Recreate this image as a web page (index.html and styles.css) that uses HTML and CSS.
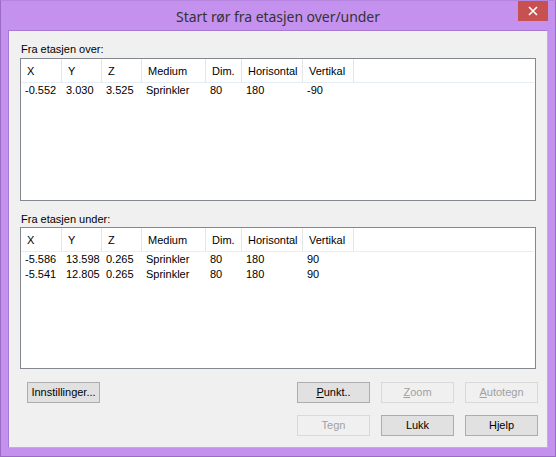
FILE: index.html
```html
<!DOCTYPE html>
<html>
<head>
<meta charset="utf-8">
<link rel="stylesheet" href="styles.css">
</head>
<body>
<div class="window">
  <div class="titlebar">
    <div class="title">Start rør fra etasjen over/under</div>
    <div class="close"><svg width="10" height="10" viewBox="0 0 10 10"><path d="M1 1 L9 9 M9 1 L1 9" stroke="#fff" stroke-width="1.6"/></svg></div>
  </div>
  <div class="client">
    <div class="label">Fra etasjen over:</div>
    <div class="list">
      <div class="row head">
        <div class="c w1">X</div><div class="c w2">Y</div><div class="c w3">Z</div><div class="c w4">Medium</div><div class="c w5">Dim.</div><div class="c w6">Horisontal</div><div class="c w7">Vertikal</div>
      </div>
      <div class="row data">
        <div class="c w1">-0.552</div><div class="c w2">3.030</div><div class="c w3">3.525</div><div class="c w4">Sprinkler</div><div class="c w5">80</div><div class="c w6">180</div><div class="c w7">-90</div>
      </div>
    </div>
    <div class="label second">Fra etasjen under:</div>
    <div class="list">
      <div class="row head">
        <div class="c w1">X</div><div class="c w2">Y</div><div class="c w3">Z</div><div class="c w4">Medium</div><div class="c w5">Dim.</div><div class="c w6">Horisontal</div><div class="c w7">Vertikal</div>
      </div>
      <div class="row data">
        <div class="c w1">-5.586</div><div class="c w2">13.598</div><div class="c w3">0.265</div><div class="c w4">Sprinkler</div><div class="c w5">80</div><div class="c w6">180</div><div class="c w7">90</div>
      </div>
      <div class="row data">
        <div class="c w1">-5.541</div><div class="c w2">12.805</div><div class="c w3">0.265</div><div class="c w4">Sprinkler</div><div class="c w5">80</div><div class="c w6">180</div><div class="c w7">90</div>
      </div>
    </div>
    <div class="buttons">
      <div class="btnrow">
        <div class="btn left">Innstillinger...</div>
        <div class="spacer"></div>
        <div class="btn"><u>P</u>unkt..</div>
        <div class="btn disabled"><u>Z</u>oom</div>
        <div class="btn disabled"><u>A</u>utotegn</div>
      </div>
      <div class="btnrow">
        <div class="spacer"></div>
        <div class="btn disabled">Tegn</div>
        <div class="btn">Lukk</div>
        <div class="btn">Hjelp</div>
      </div>
    </div>
  </div>
</div>
</body>
</html>
```

FILE: styles.css
```css
html, body {
  margin: 0;
  padding: 0;
}
body {
  width: 556px;
  height: 457px;
  overflow: hidden;
}
.window {
  width: 556px;
  height: 457px;
  box-sizing: border-box;
  background: #c591ee;
  border: 1px solid #9a6cc4;
  border-top-color: #b585e0;
  display: flex;
  flex-direction: column;
}
.titlebar {
  height: 29px;
  display: flex;
  align-items: center;
  justify-content: center;
  position: relative;
}
.title {
  font-family: "Noto Sans", sans-serif;
  font-size: 14px;
  color: #333;
  margin-top: 2px;
  letter-spacing: -0.05px;
}
.close {
  position: absolute;
  right: 7px;
  top: 0;
  width: 30px;
  height: 20px;
  background: #c75050;
  display: flex;
  align-items: center;
  justify-content: center;
}
.client {
  margin: 0 7px 0 7px;
  height: 418px;
  box-sizing: border-box;
  background: #f0f0f0;
  border: 1px solid #a57ad0;
  border-right-color: #c8a8e4;
  border-bottom-color: #c8a8e4;
  padding: 11px 11px 0 11px;
  font-family: "Liberation Sans", Arial, sans-serif;
  font-size: 11px;
  color: #000;
  display: flex;
  flex-direction: column;
}
.label {
  height: 16px;
  line-height: 14px;
  padding-left: 1px;
}
.label.second {
  margin-top: 11px;
  height: 15px;
}
.list {
  width: 516px;
  height: 143px;
  box-sizing: border-box;
  border: 1px solid #828790;
  background: #fff;
}
.list + .label.second + .list {
  height: 142px;
}
.row {
  display: flex;
}
.row.head {
  height: 24px;
  box-sizing: border-box;
  border-bottom: 1px solid #e5eef7;
  margin-right: 1px;
}
.row.head .c {
  border-right: 1px solid #e5e5e5;
  padding-left: 6px;
  line-height: 24px;
}
.row.data {
  height: 15px;
  line-height: 15px;
}
.row.data .c {
  padding-left: 4px;
}
.c {
  box-sizing: border-box;
  white-space: nowrap;
  overflow: hidden;
}
.w1 { width: 41px; }
.w2 { width: 40px; }
.w3 { width: 40px; }
.w4 { width: 64px; }
.w5 { width: 36px; }
.w6 { width: 61px; }
.w7 { width: 51px; }
.buttons {
  margin-top: 13px;
  margin-right: -2px;
  display: flex;
  flex-direction: column;
  gap: 12px;
}
.btnrow {
  display: flex;
  gap: 11px;
  padding-left: 7px;
}
.spacer {
  flex: 1;
}
.btn {
  width: 73px;
  height: 21px;
  box-sizing: border-box;
  border: 1px solid #adadad;
  background: #e1e1e1;
  text-align: center;
  line-height: 19px;
  color: #000;
}
.btn u {
  text-decoration: underline;
  text-underline-offset: 1px;
}
.btn.disabled {
  border-color: #d9d9d9;
  background: #f0f0f0;
  color: #a0a0a0;
}
```
